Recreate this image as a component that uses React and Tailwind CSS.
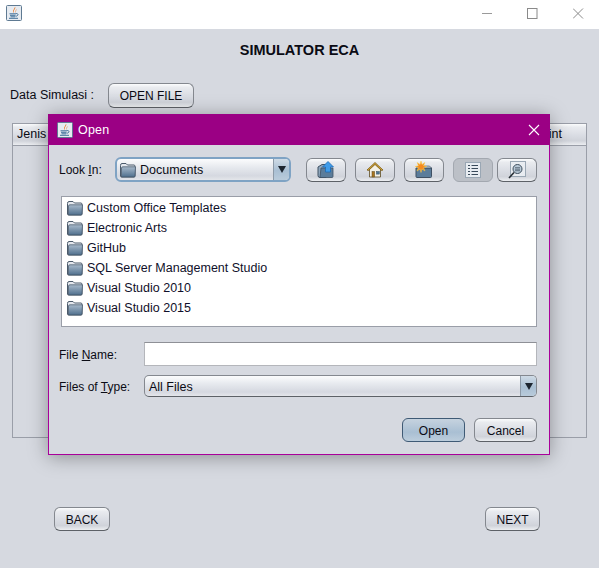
import React from 'react';

const btnFace = 'bg-[linear-gradient(to_bottom,#fbfcfd_0%,#e9ebef_15%,#d9dce3_55%,#d0d3da_80%,#eceef1_100%)]';
const comboFace = 'bg-[linear-gradient(to_bottom,#fbfcfd_0%,#e6e9ee_40%,#d5d8e0_80%,#e4e6ea_100%)]';

// java cup window icon
const JavaIcon = () => (
  <svg width="16" height="16" viewBox="0 0 16 16" className="block shrink-0">
    <rect x="0.5" y="0.5" width="15" height="15" rx="1" fill="#e6ebf1" stroke="#5f7a92" />
    <path d="M9 1.8 C10.5 4 6.5 4.8 8 8 C5.4 6 8.8 4 9 1.8 Z" fill="#e8701a" />
    <path d="M10.8 4 C10.8 5.4 9 6 9.6 8 C8.4 6.6 9.8 5.4 10.8 4 Z" fill="#e8701a" />
    <path d="M3.5 8.8 H10 M4 10.3 H9.5 M4.5 11.8 H9 M3 13.3 H12" stroke="#3f7099" strokeWidth="1" />
    <path d="M10 8.5 C13 8.5 12.5 11 9.5 11.3" fill="none" stroke="#3f7099" strokeWidth="1" />
  </svg>
);

const Folder = () => (
  <svg width="16" height="16" viewBox="0 0 16 16" className="block shrink-0">
    <defs>
      <linearGradient id="fold" x1="0" y1="0" x2="0" y2="1">
        <stop offset="0" stopColor="#a8bacb" />
        <stop offset="1" stopColor="#4f6f8d" />
      </linearGradient>
    </defs>
    <path d="M0.5 3.5 Q0.5 1.5 2 1.5 H6 L7.5 3 H14 Q15 3 15 4.5 V14 Q15 15 14 15 H1.5 Q0.5 15 0.5 14 Z" fill="#e4e8ee" stroke="#4b5a6a" />
    <path d="M1.5 6 Q1.5 4.8 3 4.8 H15.5 L15 14 Q15 15 14 15 H1.5 Z" fill="url(#fold)" stroke="#3f5063" strokeWidth="0.7" />
  </svg>
);

const UpIcon = () => (
  <svg width="18" height="18" viewBox="0 0 18 18" className="block">
    <path d="M1 6 L5 3.5 H9 V16.5 H3 Q1 16.5 1 14.5 Z" fill="#8ea6bc" stroke="#3f5063" />
    <path d="M4 7 H16 V15.5 Q16 16.5 15 16.5 H3 Z" fill="#5b7c9a" stroke="#3f5063" strokeWidth="0.8" />
    <path d="M11 0.5 L16.5 6 H13.5 V11 H8.5 V6 H5.5 Z" fill="#3f9be8" stroke="#1d6bb5" strokeWidth="0.8" />
  </svg>
);

const HomeIcon = () => (
  <svg width="18" height="18" viewBox="0 0 18 18" className="block">
    <path d="M3.5 8 V16 H14.5 V8 L9 3 Z" fill="#f4f1e6" stroke="#5c4a20" strokeWidth="0.8" />
    <path d="M1 9 L9 1.5 L17 9 L15.5 9.5 L9 3.5 L2.5 9.5 Z" fill="#d5a73b" stroke="#7a5c17" strokeWidth="0.8" />
    <rect x="6" y="10.5" width="2.6" height="5.5" fill="#a8741d" stroke="#5c4a20" strokeWidth="0.5" />
    <rect x="10.5" y="10.5" width="2.8" height="2.6" fill="#4f7693" stroke="#2f4a60" strokeWidth="0.5" />
  </svg>
);

const NewFolderIcon = () => (
  <svg width="18" height="18" viewBox="0 0 18 18" className="block">
    <path d="M1 7 H16.5 V15.5 Q16.5 16.5 15.5 16.5 H2 Q1 16.5 1 15.5 Z" fill="#5b7c9a" stroke="#3f5063" />
    <path d="M9 5 H14.5 L16.5 7 H9 Z" fill="#b6c4d1" stroke="#3f5063" strokeWidth="0.6" />
    <path d="M6 0 L7 3.5 L9.8 1.5 L8.6 4.8 L11.8 5.5 L8.6 6.6 L10 10 L7 8 L6 11.5 L5 8 L2 10 L3.4 6.6 L0.2 5.5 L3.4 4.8 L2.2 1.5 L5 3.5 Z" fill="#f58a1f" stroke="#f9d04a" strokeWidth="0.5" />
  </svg>
);

const ListIcon = () => (
  <svg width="16" height="16" viewBox="0 0 16 16" className="block">
    <rect x="0.5" y="0.5" width="15" height="15" fill="#e8ecf1" stroke="#9aa7b4" />
    <path d="M3 3.5 H5 M6.5 3.5 H13 M3 6.5 H5 M6.5 6.5 H13 M3 9.5 H5 M6.5 9.5 H13 M3 12.5 H5 M6.5 12.5 H13" stroke="#3a4a5a" />
  </svg>
);

const DetailsIcon = () => (
  <svg width="18" height="18" viewBox="0 0 18 18" className="block">
    <rect x="2.5" y="0.5" width="15" height="15" fill="#e8ecf1" stroke="#9aa7b4" />
    <circle cx="9.5" cy="8" r="4.5" fill="#b7c8d6" stroke="#3d4d5c" />
    <path d="M7 6.7 H12 M7 8.2 H12 M7 9.7 H12" stroke="#3d4d5c" strokeWidth="0.7" />
    <path d="M6 11.5 L1 17" stroke="#262d33" strokeWidth="1.6" />
  </svg>
);

const ArrowBox = () => (
  <div className="flex w-[16px] shrink-0 items-center justify-center self-stretch rounded-r-[4px] border-l border-[#8d9aa8] bg-[linear-gradient(to_bottom,#cfdbe6_0%,#a9bfd3_55%,#b9cbdb_100%)]">
    <svg width="8" height="7" viewBox="0 0 8 7"><path d="M0 0 H8 L4 7 Z" fill="#1c2530" /></svg>
  </div>
);

const ToolBtn = ({ children, pressed }) => (
  <div
    className={`flex h-[24px] w-[40px] items-center justify-center rounded-[6px] border ${
      pressed
        ? 'border-[#a3a8b0] bg-[#bcc0c7]'
        : `border-[#84888f] border-b-[#5d6167] ${btnFace}`
    }`}
  >
    {children}
  </div>
);

const Btn = ({ children, className, face = btnFace, border = 'border-[#84888f] border-b-[#5d6167]' }) => (
  <div className={`flex h-[24px] items-center justify-center rounded-[6px] border pt-px text-[12px] ${border} ${face} ${className}`}>
    {children}
  </div>
);

const files = [
  'Custom Office Templates',
  'Electronic Arts',
  'GitHub',
  'SQL Server Management Studio',
  'Visual Studio 2010',
  'Visual Studio 2015',
];

const OpenDialog = () => (
  <div className="absolute left-[48px] top-[114px] flex h-[341px] w-[502px] flex-col border border-t-0 border-[#a9009a] bg-[#d6d9e0] shadow-[0_2px_18px_rgba(0,0,0,0.35)]">
    <div className="-mx-px flex h-[31px] shrink-0 items-center bg-[#9b0084] pl-[9px] pr-[10px] text-white">
      <JavaIcon />
      <span className="ml-[5px] pt-px text-[12.5px] tracking-[0.2px]">Open</span>
      <svg width="12" height="12" viewBox="0 0 12 12" className="ml-auto">
        <path d="M1 1 L11 11 M11 1 L1 11" stroke="#fff" strokeWidth="1.1" />
      </svg>
    </div>

    <div className="flex flex-col px-[10px]">
      <div className="mt-[12px] flex items-center">
        <span className="w-[56px] text-[12px]">Look <span className="underline">I</span>n:</span>
        <div className={`flex h-[25px] w-[176px] items-center rounded-[6px] border-2 border-[#7fa3c4] ${comboFace}`}>
          <div className="ml-[3px]"><Folder /></div>
          <span className="ml-[4px] flex-1 pt-px text-[12.5px]">Documents</span>
          <ArrowBox />
        </div>
        <div className="ml-[15px] flex gap-[9px]">
          <ToolBtn><UpIcon /></ToolBtn>
          <ToolBtn><HomeIcon /></ToolBtn>
          <ToolBtn><NewFolderIcon /></ToolBtn>
        </div>
        <div className="ml-[9px] flex gap-[4px]">
          <ToolBtn pressed><ListIcon /></ToolBtn>
          <ToolBtn><DetailsIcon /></ToolBtn>
        </div>
      </div>

      <div className="ml-[2px] mt-[14px] flex h-[131px] w-[476px] flex-col self-start border border-[#9a9ea8] bg-white pl-[5px] pt-[1px]">
        {files.map((name) => (
          <div key={name} className="flex h-[20px] items-center gap-[4px]">
            <Folder />
            <span className="text-[12.5px] text-[#10102a]">{name}</span>
          </div>
        ))}
      </div>

      <div className="mt-[15px] flex items-center">
        <span className="w-[85px] pt-[2px] text-[12px]">File <span className="underline">N</span>ame:</span>
        <div className="h-[24px] w-[393px] border border-[#b4b6bb] border-t-[#8e9096] bg-white"></div>
      </div>

      <div className="mt-[9px] flex items-center">
        <span className="w-[85px] pt-[2px] text-[12px]">Files of <span className="underline">T</span>ype:</span>
        <div className={`flex h-[22px] w-[393px] items-center rounded-[5px] border border-[#84888f] border-b-[#5d6167] ${comboFace}`}>
          <span className="ml-[4px] flex-1 pt-[2px] text-[12.5px]">All Files</span>
          <ArrowBox />
        </div>
      </div>

      <div className="mt-[21px] flex justify-end gap-[9px] pr-[2px]">
        <Btn
          className="w-[63px]"
          border="border-[#3f5a75]"
          face="bg-[linear-gradient(to_bottom,#c6d3df_0%,#a9bfd3_60%,#bccddc_100%)]"
        >
          Open
        </Btn>
        <Btn className="w-[63px]">Cancel</Btn>
      </div>
    </div>
  </div>
);

export default function App() {
  return (
    <div className="relative flex h-[568px] w-[599px] flex-col overflow-hidden bg-[#d6d9e0] font-['Liberation_Sans',Arial,sans-serif] text-[#0b0b14]">
      <div className="flex h-[29px] shrink-0 items-start bg-white pl-[6px] pt-[5px]">
        <JavaIcon />
        <div className="ml-auto flex items-center gap-[35px] pr-[15px] pt-[3px]">
          <svg width="11" height="11" viewBox="0 0 11 11"><path d="M1 5.5 H11" stroke="#9a9a9a" /></svg>
          <svg width="11" height="11" viewBox="0 0 11 11"><rect x="0.5" y="0.5" width="9.5" height="10" fill="none" stroke="#8a8a8a" /></svg>
          <svg width="11" height="11" viewBox="0 0 11 11"><path d="M0 0.5 L10 10.5 M10 0.5 L0 10.5" stroke="#8a8a8a" /></svg>
        </div>
      </div>

      <div className="mt-[13px] text-center text-[14.5px] font-bold leading-[16px]">SIMULATOR ECA</div>

      <div className="ml-[10px] mt-[25px] flex items-center">
        <span className="w-[98px] text-[12.5px]">Data Simulasi :</span>
        <Btn className="h-[25px] w-[86px]">OPEN FILE</Btn>
      </div>

      <div className="mx-[12px] mt-[15px] flex h-[315px] flex-col border border-[#9a9ea8]">
        <div className={`flex h-[22px] items-center justify-between border-b border-[#9a9ea8] pl-[4px] pr-[24px] text-[12.5px] ${btnFace}`}>
          <span>Jenis</span>
          <span>Point</span>
        </div>
      </div>

      <div className="ml-[54px] mr-[59px] mt-[69px] flex justify-between">
        <Btn className="w-[56px]">BACK</Btn>
        <Btn className="w-[55px]">NEXT</Btn>
      </div>

      <OpenDialog />
    </div>
  );
}
